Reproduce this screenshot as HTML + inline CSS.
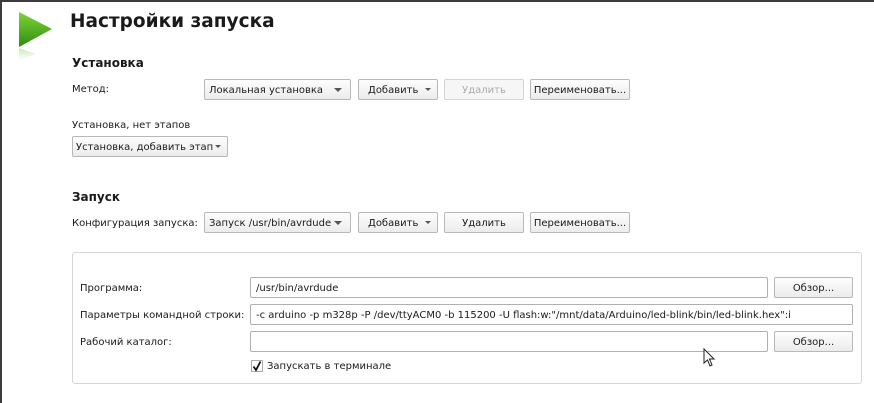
<!DOCTYPE html>
<html><head><meta charset="utf-8"><style>
*{box-sizing:border-box;margin:0;padding:0}
body{width:874px;height:403px;background:#fff;position:relative;overflow:hidden;font-family:"DejaVu Sans","Liberation Sans",sans-serif;font-size:10px;color:#1a1a1a}
.a{position:absolute;white-space:nowrap}
.btn{position:absolute;height:21px;border:1px solid #b8b8b8;border-radius:2px;background:linear-gradient(#fdfdfd,#ececec);line-height:21px;text-align:center;white-space:nowrap}
.dd{text-align:left;padding-left:4px}
.arr{position:absolute;right:6px;top:8px;width:0;height:0;border-left:3px solid transparent;border-right:3px solid transparent;border-top:3px solid #555}
.arr.big{border-left-width:4px;border-right-width:4px;border-top-width:4px;right:8px}
.inp{position:absolute;height:21px;border:1px solid #b0b0b0;border-radius:2px;background:#fff;line-height:21px;padding-left:5px;white-space:nowrap;overflow:hidden}
</style></head><body>
<div class="a" style="left:0;top:0;width:874px;height:2px;background:#3c3c3c"></div>
<div class="a" style="left:0;top:0;width:2px;height:403px;background:#3c3c3c"></div>
<svg class="a" style="left:16px;top:10px" width="40" height="52">
<defs><linearGradient id="g" x1="0" y1="0" x2="0" y2="1"><stop offset="0" stop-color="#7fd43a"/><stop offset="1" stop-color="#2f8c10"/></linearGradient>
<linearGradient id="r" x1="0" y1="0" x2="0" y2="1"><stop offset="0" stop-color="#cfe8c0"/><stop offset="1" stop-color="#fff"/></linearGradient></defs>
<polygon points="3,2 36,19 3,37" fill="url(#g)"/>
<polygon points="3,38 20,44 3,50" fill="url(#r)"/>
</svg>
<div class="a" style="left:70px;top:11px;font-size:18.5px;font-weight:bold">Настройки запуска</div>
<div class="a" style="left:72px;top:56px;font-size:12px;font-weight:bold">Установка</div>
<div class="a" style="left:72px;top:84px">Метод:</div>
<div class="btn dd" style="left:204px;top:79px;width:147px">Локальная установка<span class="arr big"></span></div>
<div class="btn dd" style="left:358px;top:79px;width:80px;padding-left:9px">Добавить<span class="arr"></span></div>
<div class="btn" style="left:444px;top:79px;width:80px;color:#aaa;border-color:#d4d4d4;background:#f6f6f6">Удалить</div>
<div class="btn" style="left:530px;top:79px;width:100px">Переименовать...</div>
<div class="a" style="left:72px;top:120px">Установка, нет этапов</div>
<div class="btn dd" style="left:72px;top:136px;width:156px;padding-left:3px">Установка, добавить этап<span class="arr"></span></div>
<div class="a" style="left:72px;top:190px;font-size:12px;font-weight:bold">Запуск</div>
<div class="a" style="left:72px;top:218px">Конфигурация запуска:</div>
<div class="btn dd" style="left:204px;top:212px;width:147px">Запуск /usr/bin/avrdude<span class="arr big"></span></div>
<div class="btn dd" style="left:358px;top:212px;width:80px;padding-left:9px">Добавить<span class="arr"></span></div>
<div class="btn" style="left:444px;top:212px;width:80px">Удалить</div>
<div class="btn" style="left:530px;top:212px;width:100px">Переименовать...</div>
<div class="a" style="left:72px;top:252px;width:790px;height:132px;border:1px solid #d6d6d6;border-radius:3px"></div>
<div class="a" style="left:80px;top:283px">Программа:</div>
<div class="inp" style="left:250px;top:277px;width:518px">/usr/bin/avrdude</div>
<div class="btn" style="left:774px;top:277px;width:79px">Обзор...</div>
<div class="a" style="left:80px;top:310px">Параметры командной строки:</div>
<div class="inp" style="left:250px;top:304px;width:603px">-c arduino -p m328p -P /dev/ttyACM0 -b 115200 -U flash:w:"/mnt/data/Arduino/led-blink/bin/led-blink.hex":i</div>
<div class="a" style="left:80px;top:337px">Рабочий каталог:</div>
<div class="inp" style="left:250px;top:331px;width:518px"></div>
<div class="btn" style="left:774px;top:331px;width:79px">Обзор...</div>
<div class="a" style="left:251px;top:360px;width:12px;height:12px;border:1px solid #aaa;background:#fff"></div>
<svg class="a" style="left:251px;top:360px" width="12" height="12"><path d="M2.5,6.5 L5,10 L9.5,1.5" fill="none" stroke="#111" stroke-width="1.8"/></svg>
<div class="a" style="left:267px;top:361px">Запускать в терминале</div>
<svg class="a" style="left:703px;top:348px" width="14" height="20"><path d="M1,1 L1,15 L4.5,12 L7,18 L9,17 L6.5,11 L11,11 Z" fill="#fff" stroke="#222" stroke-width="1"/></svg>
</body></html>
